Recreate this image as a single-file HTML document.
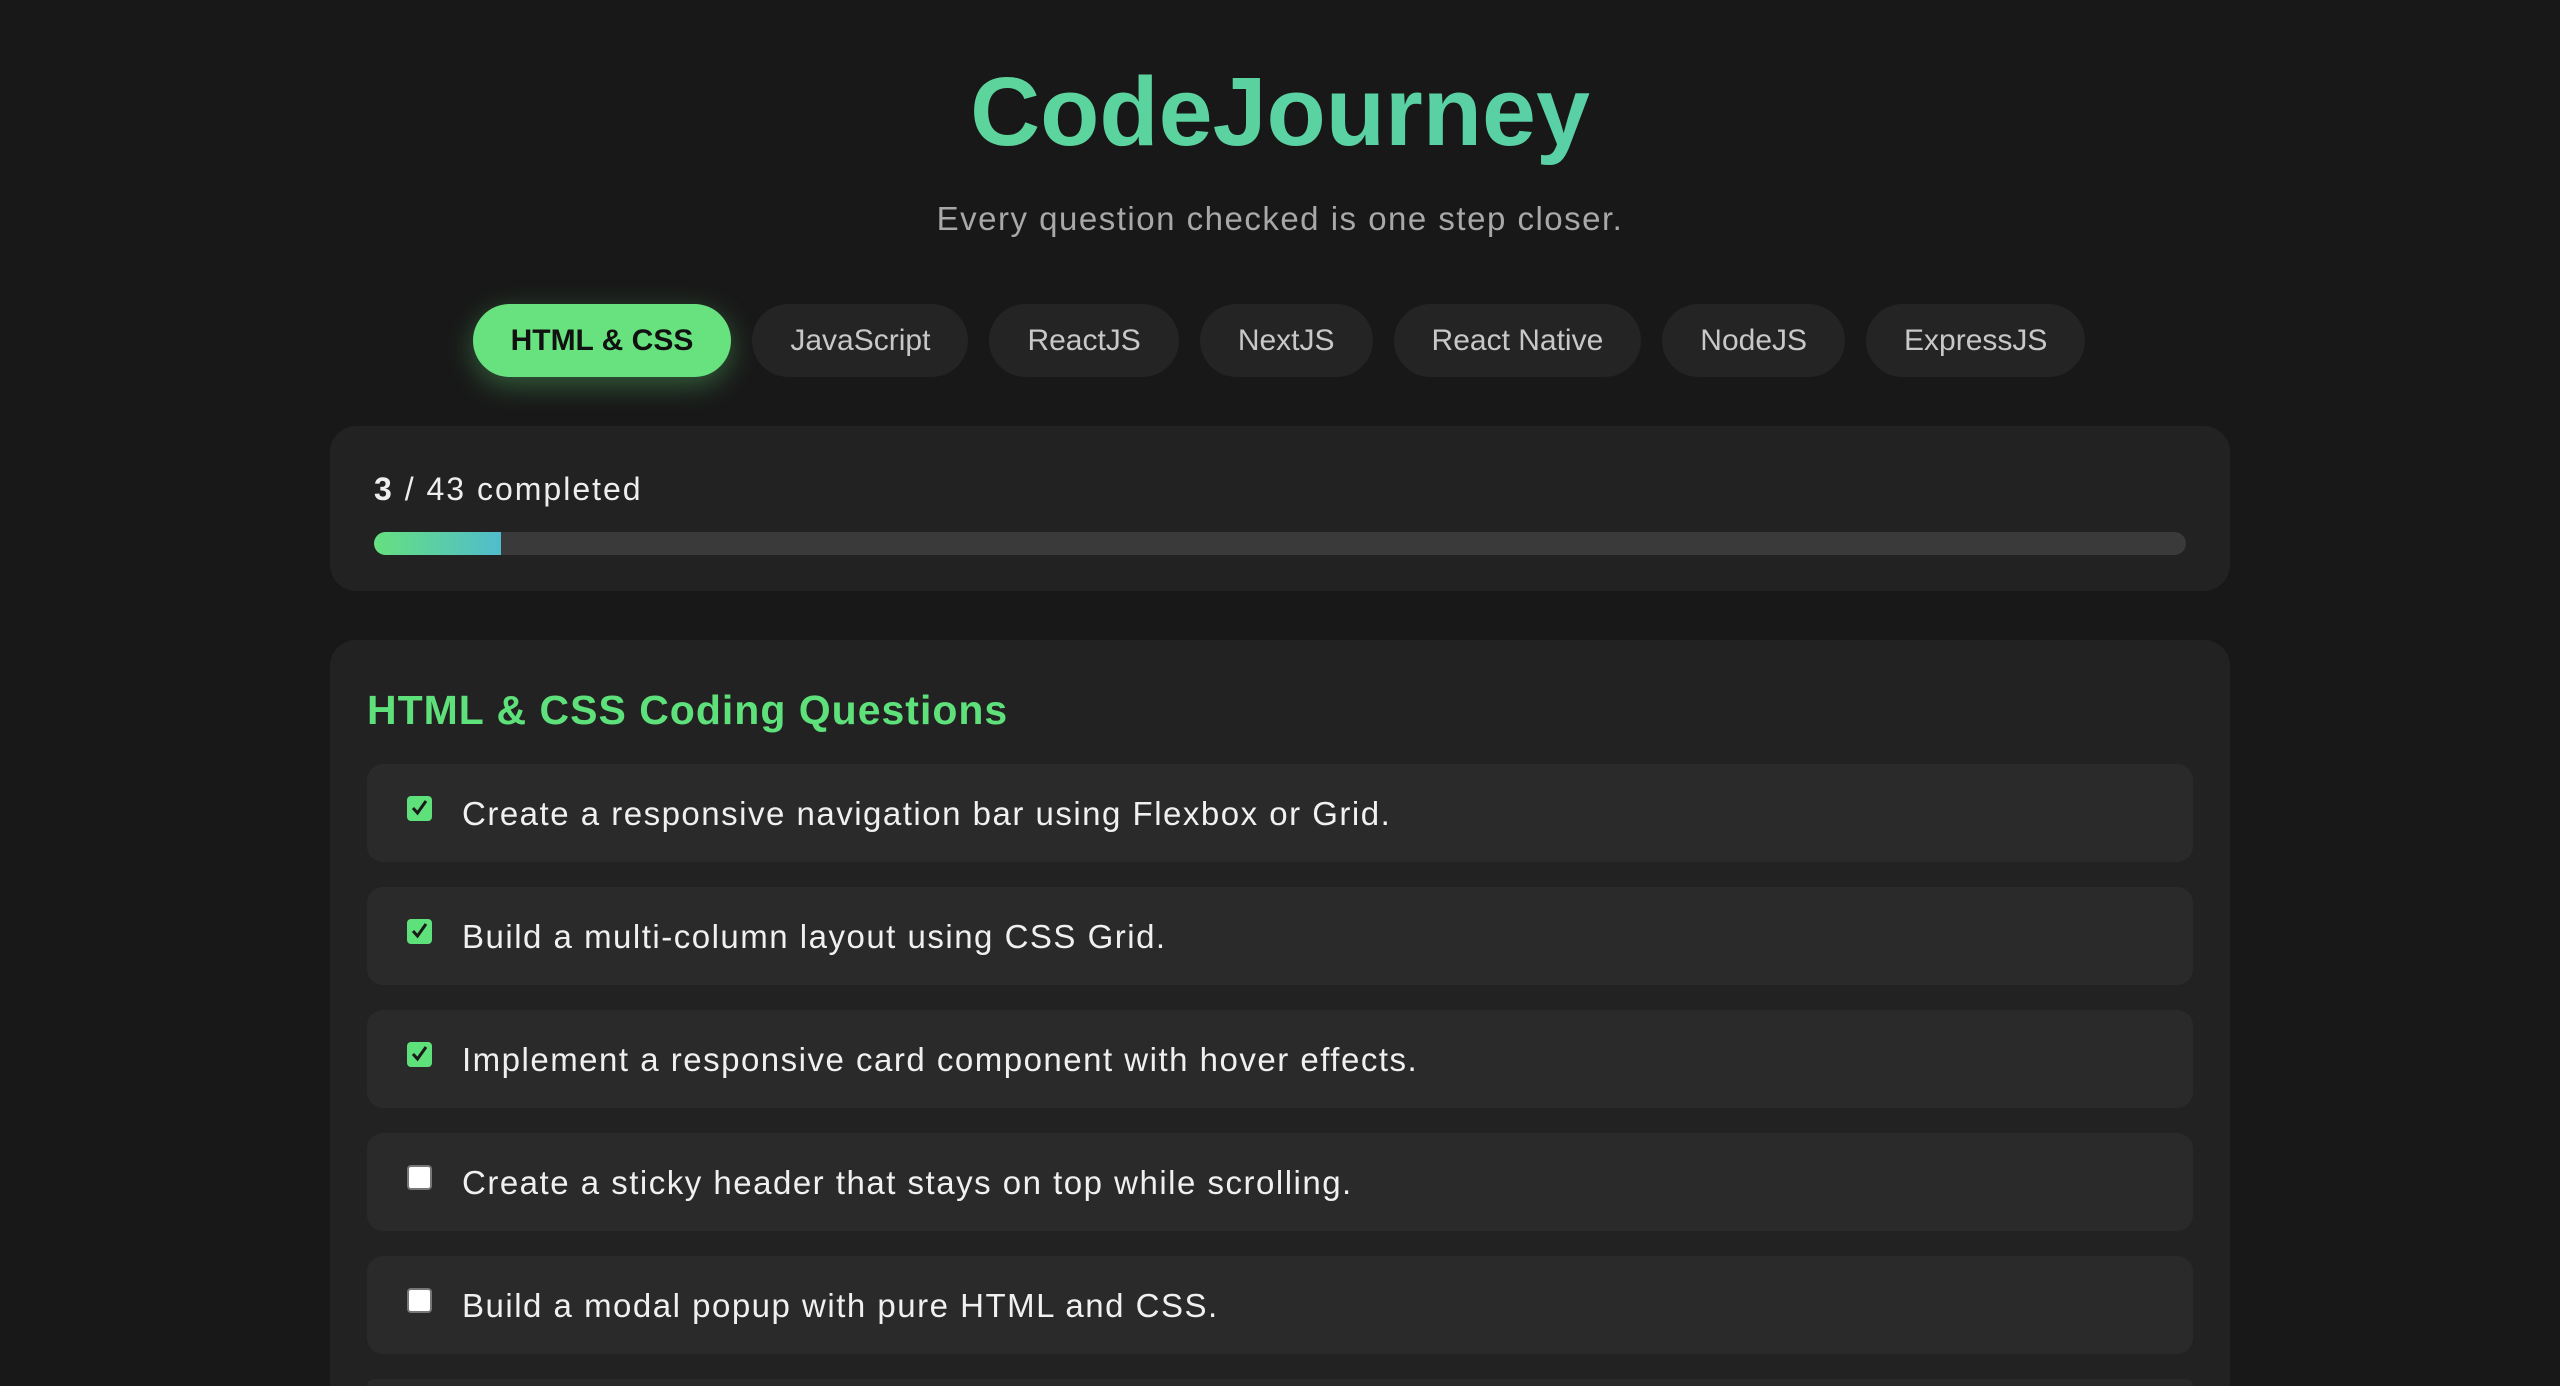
<!DOCTYPE html>
<html><head><meta charset="utf-8"><style>
*{box-sizing:border-box;margin:0;padding:0}
html,body{width:2560px;height:1386px;overflow:hidden;background:#181818;font-family:"Liberation Sans",sans-serif}
body{position:relative}
h1{position:absolute;top:52px;left:0;width:2560px;text-align:center;font-size:97px;font-weight:bold;line-height:120px;background:linear-gradient(90deg,#5fdc8a,#56c8b8);-webkit-background-clip:text;color:transparent}
.sub{position:absolute;top:198px;left:0;width:2560px;text-align:center;font-size:33px;color:#a8a8a8;line-height:42px;letter-spacing:1.5px}
.tabs{position:absolute;top:304px;left:0;width:2560px;display:flex;justify-content:center;gap:21px;padding-right:2px}
.tab{height:73px;line-height:73px;padding:0 38px;border-radius:37px;background:#242424;color:#c8c8c8;font-size:30px}
.tab.on{background:#68e27e;color:#111;font-weight:bold;box-shadow:0 8px 28px rgba(104,226,126,.35)}
.card{position:absolute;left:330px;width:1900px;background:#222;border-radius:26px;overflow:hidden}
.p{top:426px;height:165px}
.p .t{position:absolute;left:44px;top:45px;font-size:32px;color:#eee;line-height:36px;letter-spacing:2px}
.track{position:absolute;left:44px;top:106px;width:1812px;height:23px;background:#3a3a3a;border-radius:12px;overflow:hidden}
.fill{width:127px;height:23px;background:linear-gradient(90deg,#66e080,#50bccc)}
.q{top:640px;height:746px;border-radius:26px 26px 0 0}
.q h2{position:absolute;left:37px;top:46px;font-size:41px;color:#5ee07a;font-weight:bold;line-height:48px;letter-spacing:1px}
.item{position:absolute;left:37px;width:1826px;height:98px;background:#2a2a2a;border-radius:16px}
.cb{position:absolute;left:40px;top:32px;width:25px;height:25px;border-radius:4px;background:#fff;border:2px solid #777}
.cb.c{background:#5ee07a;border:none}
.cb.c svg{position:absolute;left:4px;top:3px}
.item span{position:absolute;left:95px;top:30px;font-size:33px;color:#f0f0f0;line-height:40px;letter-spacing:1.5px}
</style></head><body>
<h1>CodeJourney</h1>
<div class="sub">Every question checked is one step closer.</div>
<div class="tabs">
<div class="tab on">HTML &amp; CSS</div><div class="tab">JavaScript</div><div class="tab">ReactJS</div><div class="tab">NextJS</div><div class="tab">React Native</div><div class="tab">NodeJS</div><div class="tab">ExpressJS</div>
</div>
<div class="card p"><div class="t"><b>3</b> / 43 completed</div><div class="track"><div class="fill"></div></div></div>
<div class="card q"><h2>HTML &amp; CSS Coding Questions</h2>
<div class="item" style="top:124px"><div class="cb c"><svg width="17" height="18" viewBox="0 0 17 18"><path d="M2 9 L6.5 14 L15 2" fill="none" stroke="#1a1a1a" stroke-width="3"/></svg></div><span>Create a responsive navigation bar using Flexbox or Grid.</span></div>
<div class="item" style="top:247px"><div class="cb c"><svg width="17" height="18" viewBox="0 0 17 18"><path d="M2 9 L6.5 14 L15 2" fill="none" stroke="#1a1a1a" stroke-width="3"/></svg></div><span>Build a multi-column layout using CSS Grid.</span></div>
<div class="item" style="top:370px"><div class="cb c"><svg width="17" height="18" viewBox="0 0 17 18"><path d="M2 9 L6.5 14 L15 2" fill="none" stroke="#1a1a1a" stroke-width="3"/></svg></div><span>Implement a responsive card component with hover effects.</span></div>
<div class="item" style="top:493px"><div class="cb"></div><span>Create a sticky header that stays on top while scrolling.</span></div>
<div class="item" style="top:616px"><div class="cb"></div><span>Build a modal popup with pure HTML and CSS.</span></div>
<div class="item" style="top:739px;height:7px;border-radius:16px 16px 0 0"></div>
</div>
</body></html>
